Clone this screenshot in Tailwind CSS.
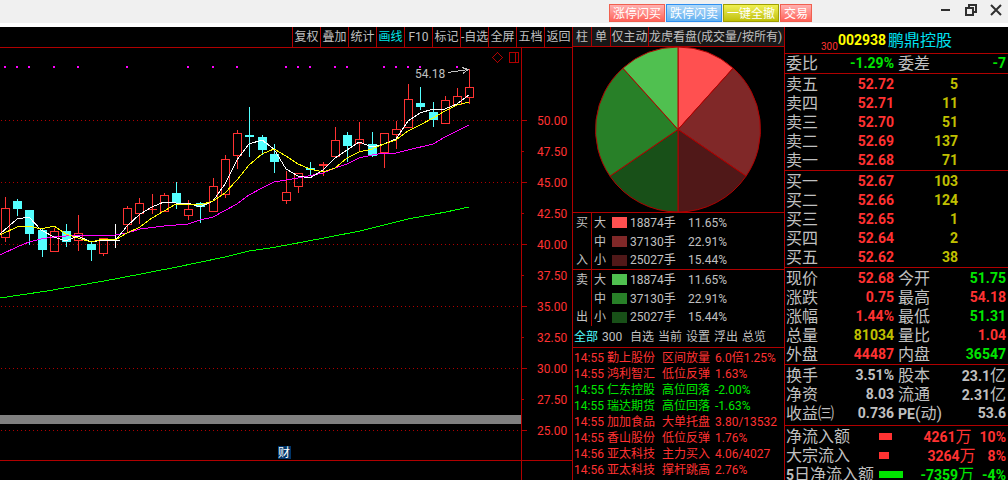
<!DOCTYPE html>
<html lang="zh-CN">
<head>
<meta charset="utf-8">
<meta name="viewport" content="width=device-width, initial-scale=1">
<title>鹏鼎控股 002938</title>
<script src="https://cdn.jsdelivr.net/npm/@tailwindcss/browser@4"></script>
</head>
<body class="min-h-screen overflow-x-hidden bg-black font-[Roboto,'Noto_Sans_CJK_SC',sans-serif] text-[12px] text-[#c0c0c0]">
<div class="flex min-h-screen flex-col">

<header class="flex h-[27px] items-start justify-end border-b-4 border-white bg-[#f0f0f0] pt-1 pr-[6px]">
  <div class="flex gap-px leading-[16px] text-white">
    <button class="h-[18px] w-14 border border-[#f06050] bg-linear-to-b from-[#ffb0b0] to-[#ff6058] pt-px">涨停闪买</button>
    <button class="h-[18px] w-14 border border-[#3090f0] bg-linear-to-b from-[#b0d8f8] to-[#60b0f0] pt-px">跌停闪卖</button>
    <button class="h-[18px] w-14 border border-[#a0a000] bg-linear-to-b from-[#f0f050] to-[#c0c000] pt-px">一键全撤</button>
    <button class="h-[18px] w-8 border border-[#f06050] bg-linear-to-b from-[#ffb0b0] to-[#ff6058] pt-px">交易</button>
  </div>
  <div class="ml-32 flex gap-[13px] text-[#303030]">
    <button aria-label="最小化"><svg class="block h-3 w-3" viewBox="0 0 12 12"><path d="M1 6h9" stroke="currentColor" stroke-width="2"/></svg></button>
    <button aria-label="还原"><svg class="block h-3 w-3" viewBox="0 0 12 12" fill="none" stroke="currentColor" stroke-width="2"><path d="M1 4h7v7H1zM4 4V1h7v7H8"/></svg></button>
    <button aria-label="关闭"><svg class="block h-3 w-3" viewBox="0 0 12 12"><path d="M1 1l10 10M11 1L1 11" stroke="currentColor" stroke-width="2"/></svg></button>
  </div>
</header>

<main class="flex flex-1">

  <section class="flex min-w-0 flex-1 flex-col">
    <nav class="flex h-[21px] justify-end border-b border-[#b00000] leading-[21px]">
      <button class="w-7 overflow-hidden border-l border-[#b00000] whitespace-nowrap">复权</button>
      <button class="w-7 overflow-hidden border-l border-[#b00000] whitespace-nowrap">叠加</button>
      <button class="w-7 overflow-hidden border-l border-[#b00000] whitespace-nowrap">统计</button>
      <button class="w-7 overflow-hidden border-l border-[#b00000] whitespace-nowrap text-[#00e6e6]">画线</button>
      <button class="w-7 overflow-hidden border-l border-[#b00000] whitespace-nowrap">F10</button>
      <button class="w-7 overflow-hidden border-l border-[#b00000] whitespace-nowrap">标记</button>
      <button class="w-7 overflow-hidden border-l border-[#b00000] whitespace-nowrap">-自选</button>
      <button class="w-7 overflow-hidden border-l border-[#b00000] whitespace-nowrap">全屏</button>
      <button class="w-7 overflow-hidden border-l border-[#b00000] whitespace-nowrap">五档</button>
      <button class="w-7 overflow-hidden border-l border-[#b00000] whitespace-nowrap">返回</button>
    </nav>
    <svg id="chart" class="block w-full" viewBox="0 48 572 432" fill="none" shape-rendering="crispEdges">
      <g id="grid" stroke="#b00000"></g>
      <path d="M521.5 48V480M0 460.5H572" stroke="#b00000"/>
      <rect y="415" width="521" height="9" fill="#808080"/>
      <g id="marks" fill="#ff00ff"></g>
      <g id="candles"></g>
      <polyline stroke="#00ff00" points="0,298 47,291 115,279 177,267 225,257 249,251 270,248 287,245 324,238 360,231 408,219 446,212 469,207"/>
      <polyline stroke="#ff00ff" points="0,255 17,247 29,242 41,239 54,237 66,236 82,235 115,235 127,233 140,229 164,226 188,224 200,220 213,217 237,204 249,195 262,188 274,182 298,178 323,173 335,168 347,164 359,158 372,155 384,153 396,153 408,150 433,144 445,137 457,131 469,125"/>
      <polyline stroke="#ffffff" points="0,234 17,219 29,217 41,230 54,237 66,241 78,236 91,242 103,240 115,241 127,226 140,214 152,207 164,202 176,203 188,203 200,207 213,201 225,184 237,160 249,144 262,140 274,149 286,169 298,176 310,178 323,170 335,158 347,150 359,142 372,147 384,144 396,139 408,121 420,113 433,109 445,109 457,104 469,95"/>
      <polyline stroke="#ffff00" points="0,235 17,227 29,226 41,229 54,226 66,234 78,238 91,242 103,239 115,240 127,233 140,227 152,218 164,211 176,204 188,204 200,205 213,201 225,193 237,180 249,165 262,154 274,149 286,156 298,164 310,169 323,172 335,168 347,158 359,152 372,149 384,144 396,140 408,131 420,125 433,118 445,111 457,105 469,102"/>
      <text x="415" y="78" fill="#c0c0c0" class="text-[12px]">54.18</text>
      <path d="M448 72.5L468 69.5M462 67.5L468 69.5L463 73.5" stroke="#c0c0c0"/>
      <path d="M497.5 52.5l5 5-5 5-5-5z" stroke="#b00000"/>
      <path d="M509.500 52.500h9v10h-9zM515.500 52.500v10" stroke="#b00000"/>
      <rect x="278" y="446" width="13" height="13" fill="#003468"/>
      <text x="278" y="457" fill="#fff" class="text-[12px]">财</text>
      <g id="axis" fill="#ff3232" class="text-[12px]"></g>
    </svg>
  </section>

  <section class="w-[212px] shrink-0 border-l border-[#b00000]">
    <nav class="flex h-5 border-b border-[#b00000] bg-[#181818] leading-[21px]">
      <button class="w-[18px]">柱</button>
      <button class="w-[19px] border-l border-[#b00000]">单</button>
      <button class="w-[38px] border-l border-[#b00000] whitespace-nowrap">仅主动</button>
      <button class="flex-1 border-l border-[#b00000] text-left whitespace-nowrap">龙虎看盘(成交量/按所有)</button>
    </nav>
    <svg class="block h-[165px] w-full" viewBox="573 47 211 165" stroke="#b00000">
      <path fill="#ff5050" d="M678 129.500V47A82.500 82.500 0 0 1 733.140 68.140Z"/>
      <path fill="#802828" d="M678 129.500L733.140 68.140A82.500 82.500 0 0 1 746.060 176.130Z"/>
      <path fill="#501818" d="M678 129.500L746.060 176.130A82.500 82.500 0 0 1 678 212Z"/>
      <path fill="#185018" d="M678 129.500V212A82.500 82.500 0 0 1 609.940 176.130Z"/>
      <path fill="#288028" d="M678 129.500L609.940 176.130A82.500 82.500 0 0 1 622.860 68.140Z"/>
      <path fill="#50c050" d="M678 129.500L622.860 68.140A82.500 82.500 0 0 1 678 47Z"/>
    </svg>
    <table class="w-full table-fixed border-separate border-spacing-0 border-t border-[#b00000] leading-[18px]">
      <colgroup><col class="w-[19px]"><col class="w-5"><col class="w-[18px]"><col class="w-[58px]"><col></colgroup>
      <tbody>
        <tr class="h-[19px]"><th class="border-r border-[#b00000] p-0 font-normal">买</th><td class="p-0 pl-[2px]">大</td><td class="p-0"><div class="h-[11px] w-[15px] bg-[#ff5050]"></div></td><td class="p-0">18874手</td><td class="p-0">11.65%</td></tr>
        <tr class="h-[19px]"><th class="border-r border-[#b00000] p-0"></th><td class="p-0 pl-[2px]">中</td><td class="p-0"><div class="h-[11px] w-[15px] bg-[#802828]"></div></td><td class="p-0">37130手</td><td class="p-0">22.91%</td></tr>
        <tr class="h-[18px]"><th class="border-r border-[#b00000] p-0 font-normal">入</th><td class="p-0 pl-[2px]">小</td><td class="p-0"><div class="h-[11px] w-[15px] bg-[#501818]"></div></td><td class="p-0">25027手</td><td class="p-0">15.44%</td></tr>
      </tbody>
    </table>
    <table class="w-full table-fixed border-separate border-spacing-0 border-t border-[#b00000] leading-[18px]">
      <colgroup><col class="w-[19px]"><col class="w-5"><col class="w-[18px]"><col class="w-[58px]"><col></colgroup>
      <tbody>
        <tr class="h-[19px]"><th class="border-r border-[#b00000] p-0 font-normal">卖</th><td class="p-0 pl-[2px]">大</td><td class="p-0"><div class="h-[11px] w-[15px] bg-[#50c050]"></div></td><td class="p-0">18874手</td><td class="p-0">11.65%</td></tr>
        <tr class="h-[19px]"><th class="border-r border-[#b00000] p-0"></th><td class="p-0 pl-[2px]">中</td><td class="p-0"><div class="h-[11px] w-[15px] bg-[#288028]"></div></td><td class="p-0">37130手</td><td class="p-0">22.91%</td></tr>
        <tr class="h-[18px]"><th class="border-r border-[#b00000] p-0 font-normal">出</th><td class="p-0 pl-[2px]">小</td><td class="p-0"><div class="h-[11px] w-[15px] bg-[#185018]"></div></td><td class="p-0">25027手</td><td class="p-0">15.44%</td></tr>
      </tbody>
    </table>
    <nav class="flex h-[22px] border-b border-[#b00000] pl-px leading-5">
      <button class="w-7 text-left text-[#54ffff]">全部</button>
      <button class="w-7 text-left">300</button>
      <button class="w-7 text-left">自选</button>
      <button class="w-7 text-left">当前</button>
      <button class="w-7 text-left">设置</button>
      <button class="w-7 text-left">浮出</button>
      <button class="w-7 text-left">总览</button>
    </nav>
    <table class="mt-[2px] w-full table-fixed border-collapse leading-[16px] whitespace-nowrap text-[#ff3232]">
      <colgroup><col class="w-[34px]"><col class="w-[55px]"><col class="w-[53px]"><col></colgroup>
      <tbody>
        <tr><td class="p-0 pl-px">14:55</td><td class="p-0">勤上股份</td><td class="p-0">区间放量</td><td class="p-0">6.0倍1.25%</td></tr>
        <tr><td class="p-0 pl-px">14:55</td><td class="p-0">鸿利智汇</td><td class="p-0">低位反弹</td><td class="p-0">1.63%</td></tr>
        <tr class="text-[#00e600]"><td class="p-0 pl-px">14:55</td><td class="p-0">仁东控股</td><td class="p-0">高位回落</td><td class="p-0">-2.00%</td></tr>
        <tr class="text-[#00e600]"><td class="p-0 pl-px">14:55</td><td class="p-0">瑞达期货</td><td class="p-0">高位回落</td><td class="p-0">-1.63%</td></tr>
        <tr><td class="p-0 pl-px">14:55</td><td class="p-0">加加食品</td><td class="p-0">大单托盘</td><td class="p-0">3.80/13532</td></tr>
        <tr><td class="p-0 pl-px">14:55</td><td class="p-0">香山股份</td><td class="p-0">低位反弹</td><td class="p-0">1.76%</td></tr>
        <tr><td class="p-0 pl-px">14:56</td><td class="p-0">亚太科技</td><td class="p-0">主力买入</td><td class="p-0">4.06/4027</td></tr>
        <tr><td class="p-0 pl-px">14:56</td><td class="p-0">亚太科技</td><td class="p-0">撑杆跳高</td><td class="p-0">2.76%</td></tr>
      </tbody>
    </table>
  </section>

  <aside class="w-56 shrink-0 border-l border-[#b00000] text-[16px] leading-[19px] whitespace-nowrap">
    <h1 class="flex h-[26px] pl-9 leading-[27px]">
      <span class="pt-[6px] text-[10px] text-[#ff3232]">300</span>
      <span class="text-[14px] font-bold text-[#ffff00]">002938</span>
      <span class="pl-[2px] text-[#00e0f0]">鹏鼎控股</span>
    </h1>

    <table class="w-full table-fixed border-separate border-spacing-0 border-t border-[#b00000]">
      <colgroup><col class="w-12"><col class="w-[61px]"><col class="w-[51px]"><col></colgroup>
      <tbody>
        <tr><th class="p-0 pl-px text-left font-normal">委比</th><td class="p-0 text-right text-[14px] font-bold text-[#00e600]">-1.29%</td><th class="p-0 pl-1 text-left font-normal">委差</th><td class="p-0 pr-[2px] text-right text-[14px] font-bold text-[#00e600]">-7</td></tr>
      </tbody>
    </table>

    <table class="w-full table-fixed border-separate border-spacing-0 border-t border-[#b00000] pt-px">
      <colgroup><col class="w-12"><col class="w-[61px]"><col></colgroup>
      <tbody>
        <tr><th class="p-0 pl-px text-left font-normal">卖五</th><td class="p-0 text-right text-[14px] font-bold text-[#ff3232]">52.72</td><td class="p-0 pr-[50px] text-right text-[14px] font-bold text-[#c0c000]">5</td></tr>
        <tr><th class="p-0 pl-px text-left font-normal">卖四</th><td class="p-0 text-right text-[14px] font-bold text-[#ff3232]">52.71</td><td class="p-0 pr-[50px] text-right text-[14px] font-bold text-[#c0c000]">11</td></tr>
        <tr><th class="p-0 pl-px text-left font-normal">卖三</th><td class="p-0 text-right text-[14px] font-bold text-[#ff3232]">52.70</td><td class="p-0 pr-[50px] text-right text-[14px] font-bold text-[#c0c000]">51</td></tr>
        <tr><th class="p-0 pl-px text-left font-normal">卖二</th><td class="p-0 text-right text-[14px] font-bold text-[#ff3232]">52.69</td><td class="p-0 pr-[50px] text-right text-[14px] font-bold text-[#c0c000]">137</td></tr>
        <tr><th class="p-0 pl-px text-left font-normal">卖一</th><td class="p-0 text-right text-[14px] font-bold text-[#ff3232]">52.68</td><td class="p-0 pr-[50px] text-right text-[14px] font-bold text-[#c0c000]">71</td></tr>
      </tbody>
    </table>

    <table class="w-full table-fixed border-separate border-spacing-0 border-t border-[#b00000] pt-px">
      <colgroup><col class="w-12"><col class="w-[61px]"><col></colgroup>
      <tbody>
        <tr><th class="p-0 pl-px text-left font-normal">买一</th><td class="p-0 text-right text-[14px] font-bold text-[#ff3232]">52.67</td><td class="p-0 pr-[50px] text-right text-[14px] font-bold text-[#c0c000]">103</td></tr>
        <tr><th class="p-0 pl-px text-left font-normal">买二</th><td class="p-0 text-right text-[14px] font-bold text-[#ff3232]">52.66</td><td class="p-0 pr-[50px] text-right text-[14px] font-bold text-[#c0c000]">124</td></tr>
        <tr><th class="p-0 pl-px text-left font-normal">买三</th><td class="p-0 text-right text-[14px] font-bold text-[#ff3232]">52.65</td><td class="p-0 pr-[50px] text-right text-[14px] font-bold text-[#c0c000]">1</td></tr>
        <tr><th class="p-0 pl-px text-left font-normal">买四</th><td class="p-0 text-right text-[14px] font-bold text-[#ff3232]">52.64</td><td class="p-0 pr-[50px] text-right text-[14px] font-bold text-[#c0c000]">2</td></tr>
        <tr><th class="p-0 pl-px text-left font-normal">买五</th><td class="p-0 text-right text-[14px] font-bold text-[#ff3232]">52.62</td><td class="p-0 pr-[50px] text-right text-[14px] font-bold text-[#c0c000]">38</td></tr>
      </tbody>
    </table>

    <table class="w-full table-fixed border-separate border-spacing-0 border-t border-[#b00000] pt-px">
      <colgroup><col class="w-12"><col class="w-[61px]"><col class="w-[51px]"><col></colgroup>
      <tbody>
        <tr><th class="p-0 pl-px text-left font-normal">现价</th><td class="p-0 text-right text-[14px] font-bold text-[#ff3232]">52.68</td><th class="p-0 pl-1 text-left font-normal">今开</th><td class="p-0 pr-[2px] text-right text-[14px] font-bold text-[#00e600]">51.75</td></tr>
        <tr><th class="p-0 pl-px text-left font-normal">涨跌</th><td class="p-0 text-right text-[14px] font-bold text-[#ff3232]">0.75</td><th class="p-0 pl-1 text-left font-normal">最高</th><td class="p-0 pr-[2px] text-right text-[14px] font-bold text-[#ff3232]">54.18</td></tr>
        <tr><th class="p-0 pl-px text-left font-normal">涨幅</th><td class="p-0 text-right text-[14px] font-bold text-[#ff3232]">1.44%</td><th class="p-0 pl-1 text-left font-normal">最低</th><td class="p-0 pr-[2px] text-right text-[14px] font-bold text-[#00e600]">51.31</td></tr>
        <tr><th class="p-0 pl-px text-left font-normal">总量</th><td class="p-0 text-right text-[14px] font-bold text-[#c0c000]">81034</td><th class="p-0 pl-1 text-left font-normal">量比</th><td class="p-0 pr-[2px] text-right text-[14px] font-bold text-[#ff3232]">1.04</td></tr>
        <tr><th class="p-0 pl-px text-left font-normal">外盘</th><td class="p-0 text-right text-[14px] font-bold text-[#ff3232]">44487</td><th class="p-0 pl-1 text-left font-normal">内盘</th><td class="p-0 pr-[2px] text-right text-[14px] font-bold text-[#00e600]">36547</td></tr>
      </tbody>
    </table>

    <table class="w-full table-fixed border-separate border-spacing-0 border-t border-[#b00000] pt-px pb-[2px]">
      <colgroup><col class="w-12"><col class="w-[61px]"><col class="w-[51px]"><col></colgroup>
      <tbody>
        <tr><th class="p-0 pl-px text-left font-normal">换手</th><td class="p-0 text-right text-[14px] font-bold">3.51%</td><th class="p-0 pl-1 text-left font-normal">股本</th><td class="p-0 pr-[2px] text-right"><b class="text-[14px] leading-none">23.1</b>亿</td></tr>
        <tr><th class="p-0 pl-px text-left font-normal">净资</th><td class="p-0 text-right text-[14px] font-bold">8.03</td><th class="p-0 pl-1 text-left font-normal">流通</th><td class="p-0 pr-[2px] text-right"><b class="text-[14px] leading-none">2.31</b>亿</td></tr>
        <tr><th class="p-0 pl-px text-left font-normal">收益㈢</th><td class="p-0 text-right text-[14px] font-bold">0.736</td><th class="p-0 pl-1 text-left font-normal"><b class="text-[14px] leading-none">PE</b>(动)</th><td class="p-0 pr-[2px] text-right text-[14px] font-bold">53.6</td></tr>
      </tbody>
    </table>

    <table class="w-full table-fixed border-separate border-spacing-0 border-t border-[#b00000] pt-px">
      <colgroup><col class="w-[94px]"><col class="w-6"><col></colgroup>
      <tbody>
        <tr><th class="p-0 pl-px text-left font-normal">净流入额</th><td class="p-0"><div class="h-[7px] w-[13px] bg-[#ff3232]"></div></td><td class="p-0 pr-[2px] text-right text-[#ff3232]"><b class="text-[14px] leading-none">4261</b>万<b class="pl-2 text-[14px] leading-none">10%</b></td></tr>
        <tr><th class="p-0 pl-px text-left font-normal">大宗流入</th><td class="p-0"><div class="h-[7px] w-[10px] bg-[#ff3232]"></div></td><td class="p-0 pr-[2px] text-right text-[#ff3232]"><b class="text-[14px] leading-none">3264</b>万<b class="pl-3 text-[14px] leading-none">8%</b></td></tr>
        <tr><th class="p-0 pl-px text-left font-normal"><b class="text-[14px] leading-none">5</b>日净流入额</th><td class="p-0"><div class="h-[7px] w-6 bg-[#00e600]"></div></td><td class="p-0 pr-[2px] text-right text-[#00e600]"><b class="text-[14px] leading-none">-7359</b>万<b class="pl-2 text-[14px] leading-none">-4%</b></td></tr>
      </tbody>
    </table>
  </aside>
</main>
</div>

<script>
const RED = '#ff3232', CYAN = '#54ffff', WHITE = '#ffffff';
// Each candle: centre x, body top, body bottom, high, low, direction (u up, d down, f flat)
const candles = [
  [5,208,238,197,242,'u'],[17,201,209,199,216,'d'],[29,210,234,210,245,'d'],[42,230,250,228,257,'d'],
  [54,231,252,228,252,'u'],[66,231,242,224,247,'d'],[78,233,241,215,251,'u'],[91,244,250,241,261,'d'],
  [103,238,254,238,256,'u'],[115,240,241,224,248,'f'],[127,208,225,206,232,'u'],[139,203,214,198,224,'u'],
  [152,209,210,194,214,'u'],[164,195,212,193,212,'u'],[176,193,203,182,209,'d'],[188,209,216,200,220,'u'],
  [200,203,207,202,223,'d'],[213,186,212,178,212,'u'],[225,159,195,155,198,'u'],[237,133,156,130,169,'u'],
  [249,135,137,107,157,'d'],[262,137,150,135,155,'d'],[274,154,162,144,173,'d'],[286,192,201,171,204,'u'],
  [298,173,187,173,193,'u'],[310,168,170,162,175,'d'],[323,164,166,162,176,'u'],[335,140,157,127,157,'u'],
  [347,135,146,132,162,'d'],[359,139,144,122,152,'u'],[372,144,156,132,157,'d'],[384,133,153,133,168,'u'],
  [396,129,135,121,149,'u'],[408,99,128,84,128,'u'],[420,103,107,87,110,'d'],[433,112,120,102,127,'d'],
  [445,100,124,96,124,'u'],[457,96,105,88,105,'u'],[469,87,98,69,104,'u']
];
document.getElementById('candles').innerHTML = candles.map(([x, t, b, hi, lo, k]) => {
  const c = k === 'u' ? RED : k === 'd' ? CYAN : WHITE;
  const hollow = k === 'u' && b - t > 2;
  const body = hollow
    ? `<rect x="${x - 3.5}" y="${t + .5}" width="8" height="${b - t - 1}" stroke="${c}"/>`
    : `<rect x="${x - 4}" y="${t}" width="9" height="${b - t}" fill="${c}"/>`;
  const wick = hollow ? `M${x + .5} ${hi}V${t}M${x + .5} ${b}V${lo}` : `M${x + .5} ${hi}V${lo}`;
  return `<path d="${wick}" stroke="${c}"/>${body}`;
}).join('');

document.getElementById('marks').innerHTML =
  [5,17,29,54,78,127,188,213,237,286,298,310,335,347,384,396,408,420,457]
    .map(x => `<rect x="${x - 1}" y="66" width="2" height="2"/>`).join('');

let grid = '', axis = '';
for (let i = 0; i <= 10; i++) {
  const y = 120 + 31 * i;
  if (i % 2 === 0) grid += `<path d="M1 ${y + .5}H521" stroke-dasharray="1 3"/>`;
  grid += `<path d="M522 ${y + .5}h${i % 2 ? 2 : 5}"/>`;
  axis += `<text x="537" y="${y + 5}">${(50 - 2.5 * i).toFixed(2)}</text>`;
}
document.getElementById('grid').innerHTML = grid;
document.getElementById('axis').innerHTML = axis;
</script>
</body>
</html>
